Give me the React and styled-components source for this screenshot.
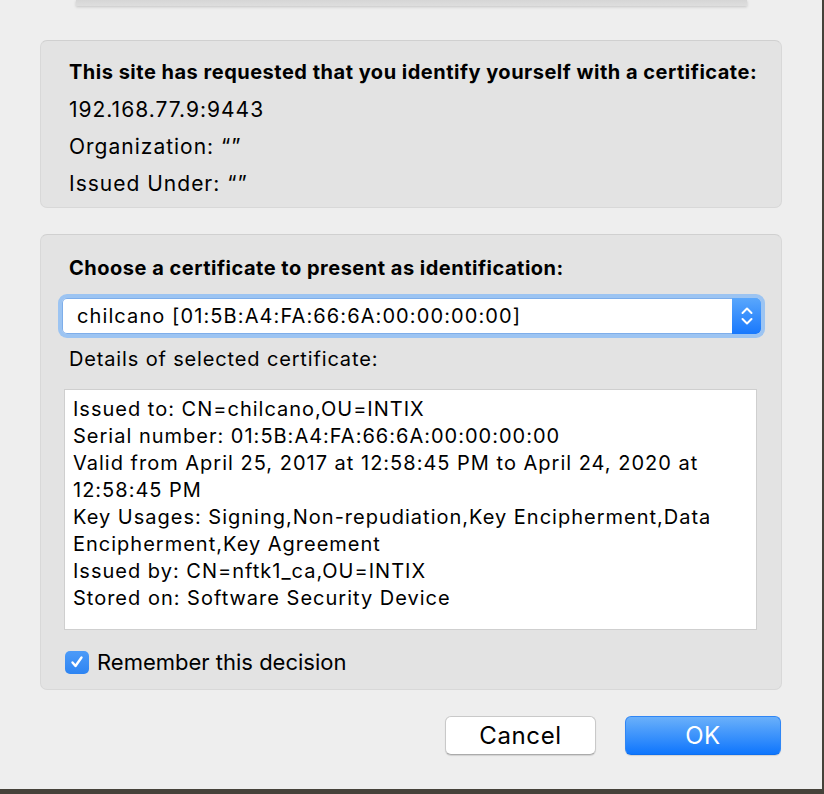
import React from "react";
import styled, { createGlobalStyle } from "styled-components";

const Global = createGlobalStyle`
  html, body { margin: 0; padding: 0; background: #45423a; }
  body { font-family: Inter, "Liberation Sans", sans-serif; color: #000; }
`;

const Window = styled.div`
  width: 822px;
  height: 789px;
  background: #eeeeee;
  box-sizing: border-box;
  padding: 0 40px;
  display: flex;
  flex-direction: column;
`;

const SheetEdge = styled.div`
  margin-left: 36px;
  width: 671px;
  height: 6px;
  background: linear-gradient(#d6d6d6, #dedede);
  box-shadow: 0 1px 3px rgba(0, 0, 0, 0.18);
`;

const Panel = styled.section`
  margin-top: ${(p) => p.$top}px;
  background: #e3e3e3;
  border: 1px solid #d8d8d8;
  border-top-color: #d0d0d0;
  border-radius: 7px;
  box-sizing: border-box;
  height: ${(p) => p.$h}px;
  display: flex;
  flex-direction: column;
  padding-top: ${(p) => p.$pt}px;
`;

const Heading = styled.div`
  margin-left: 28px;
  font-weight: 700;
  font-size: 20px;
  letter-spacing: 0.5px;
  line-height: ${(p) => p.$lh || 37}px;
  white-space: nowrap;
`;

const Line = styled.div`
  margin-left: 28px;
  font-size: 21px;
  letter-spacing: 1px;
  line-height: 37px;
`;

const SelectRing = styled.div`
  margin: 11px 0 0 17px;
  width: 707px;
  height: 44px;
  box-sizing: border-box;
  border-radius: 9px;
  background: #9cc4f2;
  padding: 4px;
  display: flex;
`;

const SelectBox = styled.div`
  flex: 1;
  display: flex;
  background: #fff;
  border-radius: 5px;
  box-shadow: inset 0 0 0 1px #7eaeea;
  overflow: hidden;
`;

const SelectText = styled.div`
  flex: 1;
  padding-left: 15px;
  font-size: 20px;
  letter-spacing: 1.1px;
  line-height: 36px;
  white-space: nowrap;
`;

const Stepper = styled.div`
  width: 29px;
  background: linear-gradient(#5aa7fc, #1878fd);
  border-radius: 0 5px 5px 0;
  display: flex;
  align-items: center;
  justify-content: center;
`;

const Label = styled.div`
  margin: 7px 0 0 28px;
  font-size: 20px;
  letter-spacing: 0.85px;
  line-height: 28px;
`;

const Details = styled.div`
  margin: 16px 0 0 23px;
  width: 693px;
  height: 241px;
  box-sizing: border-box;
  background: #fff;
  border: 1px solid #cfcfcf;
  padding: 6px 0 0 8px;
  font-size: 20px;
  letter-spacing: 1px;
  line-height: 27px;
  white-space: nowrap;
`;

const CheckRow = styled.label`
  margin: 20px 0 0 24px;
  display: flex;
  align-items: center;
  gap: 8px;
  font-size: 22px;
  line-height: 24px;
`;

const CheckBox = styled.span`
  width: 24px;
  height: 23px;
  border-radius: 5px;
  background: linear-gradient(#4d9bf8, #2d84f2);
  display: flex;
  align-items: center;
  justify-content: center;
`;

const Buttons = styled.div`
  margin-top: 26px;
  display: flex;
  justify-content: flex-end;
  gap: 29px;
  padding-right: 1px;
`;

const Button = styled.button`
  width: ${(p) => p.$w}px;
  height: 39px;
  border-radius: 6px;
  font-family: Inter, "Liberation Sans", sans-serif;
  font-size: 24px;
  letter-spacing: 0.6px;
  padding: 0;
  cursor: default;
  color: ${(p) => (p.$primary ? "#fff" : "#000")};
  border: ${(p) => (p.$primary ? "1px solid #2f86f5" : "1px solid #c9c9c9")};
  border-bottom-color: ${(p) => (p.$primary ? "#0d6ff0" : "#ababab")};
  background: ${(p) =>
    p.$primary ? "linear-gradient(#6ab0fa, #0f76fd)" : "#fff"};
  box-shadow: 0 1px 1px rgba(0, 0, 0, 0.12);
`;

const detailLines = [
  "Issued to: CN=chilcano,OU=INTIX",
  "Serial number: 01:5B:A4:FA:66:6A:00:00:00:00",
  "Valid from April 25, 2017 at 12:58:45 PM to April 24, 2020 at",
  "12:58:45 PM",
  "Key Usages: Signing,Non-repudiation,Key Encipherment,Data",
  "Encipherment,Key Agreement",
  "Issued by: CN=nftk1_ca,OU=INTIX",
  "Stored on: Software Security Device",
];

export default function App() {
  return (
    <>
      <Global />
      <Window>
        <SheetEdge />
        <Panel $top={34} $h={168} $pt={13}>
          <Heading>This site has requested that you identify yourself with a certificate:</Heading>
          <Line>192.168.77.9:9443</Line>
          <Line>Organization: “”</Line>
          <Line>Issued Under: “”</Line>
        </Panel>
        <Panel $top={26} $h={456} $pt={18}>
          <Heading $lh={30}>Choose a certificate to present as identification:</Heading>
          <SelectRing>
            <SelectBox>
              <SelectText>chilcano [01:5B:A4:FA:66:6A:00:00:00:00]</SelectText>
              <Stepper>
                <svg width="14" height="22" viewBox="0 0 14 22" fill="none" stroke="#fff" strokeWidth="2" strokeLinecap="round" strokeLinejoin="round">
                  <path d="M2.5 8 L7 3.5 L11.5 8" />
                  <path d="M2.5 14 L7 18.5 L11.5 14" />
                </svg>
              </Stepper>
            </SelectBox>
          </SelectRing>
          <Label>Details of selected certificate:</Label>
          <Details>
            {detailLines.map((l) => (
              <div key={l}>{l}</div>
            ))}
          </Details>
          <CheckRow>
            <CheckBox>
              <svg width="16" height="16" viewBox="0 0 16 16" fill="none" stroke="#fff" strokeWidth="2.4" strokeLinecap="round" strokeLinejoin="round">
                <path d="M3.5 8.5 L6.5 12 L12.5 3.5" />
              </svg>
            </CheckBox>
            Remember this decision
          </CheckRow>
        </Panel>
        <Buttons>
          <Button $w={151}>Cancel</Button>
          <Button $w={156} $primary>OK</Button>
        </Buttons>
      </Window>
    </>
  );
}
